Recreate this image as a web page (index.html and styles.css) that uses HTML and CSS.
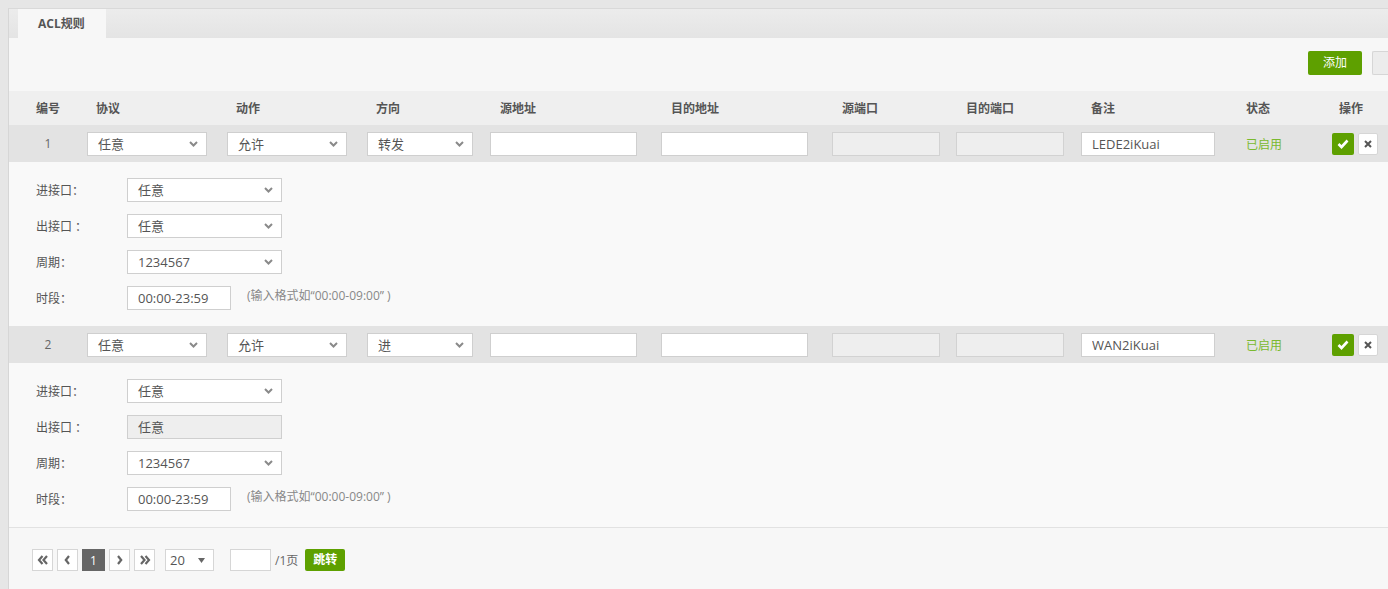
FILE: index.html
```html
<!DOCTYPE html>
<html>
	<head>
		<meta charset="UTF-8">
		<title>ACL规则</title>
		<link rel="stylesheet" href="styles.css">
	</head>
	<body>
		<div class="panel">
			<!--tab-->
			<div class="tabs">
				<div class="tab">ACL规则</div>
			</div>
			<!--toolbar-->
			<div class="toolbar">
				<span class="btn btn-green">添加</span>
				<span class="btn btn-gray"></span>
			</div>
			<!--head-->
			<div class="thead">
				<div class="c-no">编号</div>
				<div class="c-sel">协议</div>
				<div class="c-sel">动作</div>
				<div class="c-dir">方向</div>
				<div class="c-addr">源地址</div>
				<div class="c-addr">目的地址</div>
				<div class="c-port">源端口</div>
				<div class="c-port2">目的端口</div>
				<div class="c-note">备注</div>
				<div class="c-state">状态</div>
				<div class="c-op">操作</div>
			</div>

			<!-- 规则1 -->
			<div class="row">
				<div class="c-no">1</div>
				<div class="c-sel"><div class="select w120"><span>任意</span><svg class="arr" width="9" height="6" viewBox="0 0 9 6"><path d="M1 1l3.5 3.5L8 1" fill="none" stroke="#8a8a8a" stroke-width="2"/></svg></div></div>
				<div class="c-sel"><div class="select w120"><span>允许</span><svg class="arr" width="9" height="6" viewBox="0 0 9 6"><path d="M1 1l3.5 3.5L8 1" fill="none" stroke="#8a8a8a" stroke-width="2"/></svg></div></div>
				<div class="c-dir"><div class="select w106"><span>转发</span><svg class="arr" width="9" height="6" viewBox="0 0 9 6"><path d="M1 1l3.5 3.5L8 1" fill="none" stroke="#8a8a8a" stroke-width="2"/></svg></div></div>
				<div class="c-addr"><input class="text w147" type="text" value=""></div>
				<div class="c-addr"><input class="text w147" type="text" value=""></div>
				<div class="c-port"><input class="text w108" type="text" value="" disabled></div>
				<div class="c-port2"><input class="text w108" type="text" value="" disabled></div>
				<div class="c-note"><input class="text w134" type="text" value="LEDE2iKuai"></div>
				<div class="c-state on">已启用</div>
				<div class="c-op">
					<span class="op-ok"><svg width="12" height="10" viewBox="0 0 12 10"><path d="M1.5 5l3 3 6-6.5" fill="none" stroke="#fff" stroke-width="2.6"/></svg></span>
					<span class="op-del"><svg width="8" height="8" viewBox="0 0 8 8"><path d="M1 1l6 6M7 1l-6 6" stroke="#555" stroke-width="2"/></svg></span>
				</div>
			</div>
			<div class="detail">
				<div class="field">
					<label>进接口：</label>
					<div class="select w155"><span>任意</span><svg class="arr" width="9" height="6" viewBox="0 0 9 6"><path d="M1 1l3.5 3.5L8 1" fill="none" stroke="#8a8a8a" stroke-width="2"/></svg></div>
				</div>
				<div class="field">
					<label>出接口 ：</label>
					<div class="select w155"><span>任意</span><svg class="arr" width="9" height="6" viewBox="0 0 9 6"><path d="M1 1l3.5 3.5L8 1" fill="none" stroke="#8a8a8a" stroke-width="2"/></svg></div>
				</div>
				<div class="field">
					<label>周期：</label>
					<div class="select w155"><span>1234567</span><svg class="arr" width="9" height="6" viewBox="0 0 9 6"><path d="M1 1l3.5 3.5L8 1" fill="none" stroke="#8a8a8a" stroke-width="2"/></svg></div>
				</div>
				<div class="field">
					<label>时段：</label>
					<input class="text w104" type="text" value="00:00-23:59">
					<span class="tip">(输入格式如“00:00-09:00” )</span>
				</div>
			</div>

			<!-- 规则2 -->
			<div class="row">
				<div class="c-no">2</div>
				<div class="c-sel"><div class="select w120"><span>任意</span><svg class="arr" width="9" height="6" viewBox="0 0 9 6"><path d="M1 1l3.5 3.5L8 1" fill="none" stroke="#8a8a8a" stroke-width="2"/></svg></div></div>
				<div class="c-sel"><div class="select w120"><span>允许</span><svg class="arr" width="9" height="6" viewBox="0 0 9 6"><path d="M1 1l3.5 3.5L8 1" fill="none" stroke="#8a8a8a" stroke-width="2"/></svg></div></div>
				<div class="c-dir"><div class="select w106"><span>进</span><svg class="arr" width="9" height="6" viewBox="0 0 9 6"><path d="M1 1l3.5 3.5L8 1" fill="none" stroke="#8a8a8a" stroke-width="2"/></svg></div></div>
				<div class="c-addr"><input class="text w147" type="text" value=""></div>
				<div class="c-addr"><input class="text w147" type="text" value=""></div>
				<div class="c-port"><input class="text w108" type="text" value="" disabled></div>
				<div class="c-port2"><input class="text w108" type="text" value="" disabled></div>
				<div class="c-note"><input class="text w134" type="text" value="WAN2iKuai"></div>
				<div class="c-state on">已启用</div>
				<div class="c-op">
					<span class="op-ok"><svg width="12" height="10" viewBox="0 0 12 10"><path d="M1.5 5l3 3 6-6.5" fill="none" stroke="#fff" stroke-width="2.6"/></svg></span>
					<span class="op-del"><svg width="8" height="8" viewBox="0 0 8 8"><path d="M1 1l6 6M7 1l-6 6" stroke="#555" stroke-width="2"/></svg></span>
				</div>
			</div>
			<div class="detail">
				<div class="field">
					<label>进接口：</label>
					<div class="select w155"><span>任意</span><svg class="arr" width="9" height="6" viewBox="0 0 9 6"><path d="M1 1l3.5 3.5L8 1" fill="none" stroke="#8a8a8a" stroke-width="2"/></svg></div>
				</div>
				<div class="field">
					<label>出接口 ：</label>
					<div class="select w155 disabled"><span>任意</span></div>
				</div>
				<div class="field">
					<label>周期：</label>
					<div class="select w155"><span>1234567</span><svg class="arr" width="9" height="6" viewBox="0 0 9 6"><path d="M1 1l3.5 3.5L8 1" fill="none" stroke="#8a8a8a" stroke-width="2"/></svg></div>
				</div>
				<div class="field">
					<label>时段：</label>
					<input class="text w104" type="text" value="00:00-23:59">
					<span class="tip">(输入格式如“00:00-09:00” )</span>
				</div>
			</div>

			<!--pager-->
			<div class="pager">
				<span class="pg"><svg width="12" height="10" viewBox="0 0 12 10"><path d="M5.5 1L2 5l3.5 4M10 1L6.5 5 10 9" fill="none" stroke="#666" stroke-width="2.2"/></svg></span>
				<span class="pg"><svg width="7" height="10" viewBox="0 0 7 10"><path d="M5 1L1.8 5 5 9" fill="none" stroke="#666" stroke-width="2.2"/></svg></span>
				<span class="pg cur">1</span>
				<span class="pg"><svg width="7" height="10" viewBox="0 0 7 10"><path d="M2 1l3.2 4L2 9" fill="none" stroke="#666" stroke-width="2.2"/></svg></span>
				<span class="pg"><svg width="12" height="10" viewBox="0 0 12 10"><path d="M2 1l3.5 4L2 9M6.5 1L10 5 6.5 9" fill="none" stroke="#666" stroke-width="2.2"/></svg></span>
				<div class="size"><span>20</span><svg width="7" height="5" viewBox="0 0 7 5"><path d="M0 0h7L3.5 5z" fill="#666"/></svg></div>
				<input class="jump" type="text" value="">
				<span class="total">/1页</span>
				<span class="btn btn-green go">跳转</span>
			</div>
		</div>
	</body>
</html>
```

FILE: styles.css
```css
body,div,span,input,label{
	margin: 0px;
	padding: 0px;
}
html,body{
	overflow: hidden;
}
body{
	padding: 8px 0 0 8px;
	height: 581px;
	background-color: #e6e6e6;
	font-family: "Open Sans", "Noto Sans CJK SC", sans-serif;
	font-size: 13px;
	color: #555;
}
.panel{
	height: 100%;
	background-color: #f7f7f7;
	border-top: 1px solid #d9d9d9;
	border-left: 1px solid #d6d6d6;
}
/*tab start*/
.tabs{
	height: 29px;
	padding-left: 9px;
	background: linear-gradient(#ececec, #e4e4e4);
	display: flex;
}
.tabs .tab{
	width: 88px;
	height: 29px;
	line-height: 29px;
	font-size: 12px;
	font-weight: bold;
	color: #555;
	background-color: #f7f7f7;
	box-sizing: border-box;
	padding-left: 20px;
}
/*tab end*/

/*toolbar*/
.toolbar{
	height: 53px;
	padding-top: 13px;
	box-sizing: border-box;
	display: flex;
	justify-content: flex-end;
	gap: 10px;
}
.btn{
	display: inline-block;
	height: 24px;
	line-height: 24px;
	font-size: 12px;
	text-align: center;
	border-radius: 2px;
	box-sizing: border-box;
}
.btn-green{
	width: 54px;
	color: #fff;
	background-color: #5ea000;
}
.btn-gray{
	width: 16px;
	background-color: #ececec;
	border: 1px solid #d6d6d6;
	border-right: none;
	border-radius: 2px 0 0 2px;
}

/*table head*/
.thead,.row{
	display: flex;
	align-items: center;
}
.thead{
	height: 34px;
	background-color: #efefef;
	font-size: 12px;
	font-weight: bold;
	color: #555;
}
.thead > div{
	padding-left: 10px;
	box-sizing: border-box;
}
.thead .c-no{
	padding-left: 0;
}
.thead .c-sel,.thead .c-dir{
	padding-left: 9px;
}
.thead .c-state{
	padding-left: 0;
}
.thead .c-op{
	padding-left: 7px;
}
.c-no{
	width: 78px;
	text-align: center;
	flex: none;
}
.c-sel{ width: 140px; flex: none; }
.c-dir{ width: 123px; flex: none; }
.c-addr{ width: 171px; flex: none; }
.c-port{ width: 124px; flex: none; }
.c-port2{ width: 125px; flex: none; }
.c-note{ width: 165px; flex: none; }
.c-state{ width: 86px; flex: none; font-size: 12px; }
.c-op{ flex: 1; display: flex; gap: 4px; }

/*rule row*/
.row{
	height: 37px;
	background-color: #e3e3e3;
}
.row .c-no{
	font-size: 12px;
	color: #666;
}
.row .on{
	color: #7ab92f;
}
.op-ok,.op-del{
	width: 22px;
	height: 22px;
	display: flex;
	align-items: center;
	justify-content: center;
	box-sizing: border-box;
	border-radius: 2px;
}
.op-ok{
	background-color: #5ea000;
}
.op-del{
	width: 20px;
	background-color: #fff;
	border: 1px solid #d6d6d6;
}

/*controls*/
.select,.text{
	height: 24px;
	box-sizing: border-box;
	border: 1px solid #cfcfcf;
	background-color: #fff;
	font-family: "Open Sans", "Noto Sans CJK SC", sans-serif;
	font-size: 13px;
	color: #555;
}
.select{
	display: flex;
	align-items: center;
	justify-content: space-between;
	padding: 0 8px 0 10px;
	line-height: 22px;
}
.select.disabled{
	background-color: #eee;
}
.text{
	padding: 0 10px;
	outline: none;
}
.text:disabled{
	background-color: #eeeeee;
	border-color: #d2d2d2;
}
.w104{ width: 104px; }
.w106{ width: 106px; }
.w108{ width: 108px; }
.w120{ width: 120px; }
.w134{ width: 134px; }
.w147{ width: 147px; }
.w155{ width: 155px; }

/*detail*/
.detail{
	padding: 16px 0 16px 27px;
	display: flex;
	flex-direction: column;
	gap: 12px;
	background-color: #f9f9f9;
}
.field{
	height: 24px;
	display: flex;
	align-items: center;
}
.field label{
	width: 91px;
	font-size: 12px;
	color: #555;
}
.field .tip{
	margin-left: 16px;
	font-size: 12px;
	color: #888;
	margin-top: -6px;
}

/*pager*/
.pager{
	border-top: 1px solid #e2e2e2;
	padding: 21px 0 0 23px;
	display: flex;
	align-items: center;
	gap: 4px;
}
.pager .pg{
	width: 21px;
	height: 22px;
	box-sizing: border-box;
	border: 1px solid #d6d6d6;
	background-color: #fff;
	display: flex;
	align-items: center;
	justify-content: center;
	font-size: 12px;
}
.pager .pg.cur{
	width: 23px;
	background-color: #666;
	border-color: #666;
	color: #fff;
}
.pager .size{
	margin-left: 6px;
	width: 49px;
	height: 22px;
	box-sizing: border-box;
	border: 1px solid #d6d6d6;
	background-color: #fff;
	display: flex;
	align-items: center;
	justify-content: space-between;
	padding: 0 8px 0 4px;
	font-size: 13px;
}
.pager .jump{
	margin-left: 12px;
	width: 41px;
	height: 22px;
	box-sizing: border-box;
	border: 1px solid #d6d6d6;
	background-color: #fff;
	outline: none;
}
.pager .total{
	font-size: 12px;
	color: #666;
}
.pager .go{
	width: 40px;
	height: 22px;
	line-height: 22px;
	margin-left: 3px;
	font-weight: bold;
}
```
